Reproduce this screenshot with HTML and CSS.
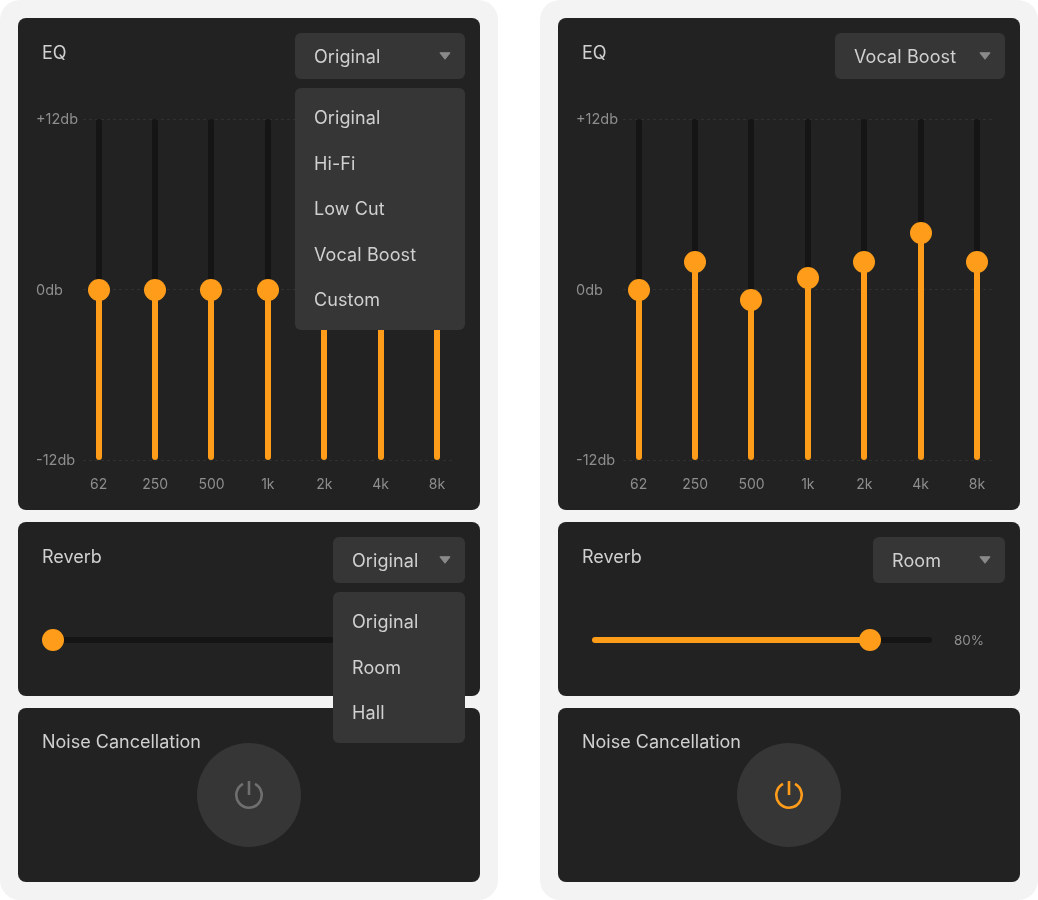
FILE: index.html
```html
<!DOCTYPE html>
<html lang="en">
<head>
<meta charset="utf-8">
<title>Audio settings</title>
<link rel="stylesheet" href="styles.css">
</head>
<body>
<main class="app">
  <section class="panel">
    <div class="card">
      <div class="head">
        <h2 class="title">EQ</h2>
        <div class="select select-wide">
          <div class="select-box"><span>Original</span><svg class="caret" viewBox="0 0 12 8"><path d="M1.2 .8h9.6L6 7z" fill="#8a8a8a" stroke="#8a8a8a" stroke-width="1.2" stroke-linejoin="round"/></svg></div>
          <ul class="menu">
            <li>Original</li><li>Hi-Fi</li><li>Low Cut</li><li>Vocal Boost</li><li>Custom</li>
          </ul>
        </div>
      </div>
      <div class="chart">
        <div class="axis">
          <div class="tick"><span class="tick-label">+12db</span><i class="tick-line"></i></div>
          <div class="tick"><span class="tick-label">0db</span><i class="tick-line"></i></div>
          <div class="tick"><span class="tick-label">-12db</span><i class="tick-line"></i></div>
        </div>
        <div class="bands">
          <div class="band"><div class="track"><div class="fill" style="height:50%"><b class="thumb"></b></div></div><span class="band-label">62</span></div>
          <div class="band"><div class="track"><div class="fill" style="height:50%"><b class="thumb"></b></div></div><span class="band-label">250</span></div>
          <div class="band"><div class="track"><div class="fill" style="height:50%"><b class="thumb"></b></div></div><span class="band-label">500</span></div>
          <div class="band"><div class="track"><div class="fill" style="height:50%"><b class="thumb"></b></div></div><span class="band-label">1k</span></div>
          <div class="band"><div class="track"><div class="fill" style="height:50%"><b class="thumb"></b></div></div><span class="band-label">2k</span></div>
          <div class="band"><div class="track"><div class="fill" style="height:50%"><b class="thumb"></b></div></div><span class="band-label">4k</span></div>
          <div class="band"><div class="track"><div class="fill" style="height:50%"><b class="thumb"></b></div></div><span class="band-label">8k</span></div>
        </div>
      </div>
    </div>
    <div class="card">
      <div class="head">
        <h2 class="title">Reverb</h2>
        <div class="select select-narrow">
          <div class="select-box"><span>Original</span><svg class="caret" viewBox="0 0 12 8"><path d="M1.2 .8h9.6L6 7z" fill="#8a8a8a" stroke="#8a8a8a" stroke-width="1.2" stroke-linejoin="round"/></svg></div>
          <ul class="menu">
            <li>Original</li><li>Room</li><li>Hall</li>
          </ul>
        </div>
      </div>
      <div class="level">
        <div class="level-track"><div class="level-fill" style="width:0.3%"><b class="thumb thumb-h"></b></div></div>
        <span class="level-value">0%</span>
      </div>
    </div>
    <div class="card card-noise">
      <h2 class="title">Noise Cancellation</h2>
      <button class="power" type="button"><svg viewBox="0 0 28 28" class="power-icon"><path d="M8 2.81a12.7 12.7 0 1 0 12 0" fill="none" stroke="#6f6f6f" stroke-width="2.6"/><path d="M14 0v14" stroke="#6f6f6f" stroke-width="2.6" fill="none"/></svg></button>
    </div>
  </section>

  <section class="panel">
    <div class="card">
      <div class="head">
        <h2 class="title">EQ</h2>
        <div class="select select-wide">
          <div class="select-box"><span>Vocal Boost</span><svg class="caret" viewBox="0 0 12 8"><path d="M1.2 .8h9.6L6 7z" fill="#8a8a8a" stroke="#8a8a8a" stroke-width="1.2" stroke-linejoin="round"/></svg></div>
        </div>
      </div>
      <div class="chart">
        <div class="axis">
          <div class="tick"><span class="tick-label">+12db</span><i class="tick-line"></i></div>
          <div class="tick"><span class="tick-label">0db</span><i class="tick-line"></i></div>
          <div class="tick"><span class="tick-label">-12db</span><i class="tick-line"></i></div>
        </div>
        <div class="bands">
          <div class="band"><div class="track"><div class="fill" style="height:50%"><b class="thumb"></b></div></div><span class="band-label">62</span></div>
          <div class="band"><div class="track"><div class="fill" style="height:58%"><b class="thumb"></b></div></div><span class="band-label">250</span></div>
          <div class="band"><div class="track"><div class="fill" style="height:46.9%"><b class="thumb"></b></div></div><span class="band-label">500</span></div>
          <div class="band"><div class="track"><div class="fill" style="height:53.4%"><b class="thumb"></b></div></div><span class="band-label">1k</span></div>
          <div class="band"><div class="track"><div class="fill" style="height:58%"><b class="thumb"></b></div></div><span class="band-label">2k</span></div>
          <div class="band"><div class="track"><div class="fill" style="height:66.6%"><b class="thumb"></b></div></div><span class="band-label">4k</span></div>
          <div class="band"><div class="track"><div class="fill" style="height:58%"><b class="thumb"></b></div></div><span class="band-label">8k</span></div>
        </div>
      </div>
    </div>
    <div class="card">
      <div class="head">
        <h2 class="title">Reverb</h2>
        <div class="select select-narrow">
          <div class="select-box"><span>Room</span><svg class="caret" viewBox="0 0 12 8"><path d="M1.2 .8h9.6L6 7z" fill="#8a8a8a" stroke="#8a8a8a" stroke-width="1.2" stroke-linejoin="round"/></svg></div>
        </div>
      </div>
      <div class="level">
        <div class="level-track"><div class="level-fill" style="width:81.76%"><b class="thumb thumb-h"></b></div></div>
        <span class="level-value">80%</span>
      </div>
    </div>
    <div class="card card-noise">
      <h2 class="title">Noise Cancellation</h2>
      <button class="power" type="button"><svg viewBox="0 0 28 28" class="power-icon"><path d="M8 2.81a12.7 12.7 0 1 0 12 0" fill="none" stroke="#ff9d1a" stroke-width="2.6"/><path d="M14 0v14" stroke="#ff9d1a" stroke-width="2.6" fill="none"/></svg></button>
    </div>
  </section>
</main>
</body>
</html>
```
FILE: styles.css
```css
* { box-sizing: border-box; }
html, body { margin: 0; padding: 0; background: #fff; }
body { font-family: "Inter", "Liberation Sans", sans-serif; color: #d0d0d0; }

.app { display: flex; justify-content: space-between; width: 1038px; height: 900px; overflow: hidden; }
.panel { width: 498px; height: 900px; padding: 18px; background: #f3f3f3; border-radius: 20px; display: flex; flex-direction: column; gap: 12px; will-change: transform; }
.card { position: relative; background: #222222; border-radius: 8px; padding: 15px 15px 15px 24px; }

.head { display: flex; justify-content: space-between; align-items: flex-start; }
.title { margin: 8px 0 0; font-size: 18px; line-height: 24px; font-weight: 400; color: #d0d0d0; }

.select { position: relative; z-index: 2; }
.select-wide { width: 170px; }
.select-narrow { width: 132px; }
.select-box { height: 46px; padding: 0 14px 0 19px; display: flex; align-items: center; justify-content: space-between; background: #363636; border-radius: 6px; font-size: 18px; letter-spacing: .1px; }
.caret { width: 12px; height: 8px; display: block; }
.menu { position: absolute; top: 55px; left: 0; right: 0; margin: 0; padding: 7px 19px; list-style: none; background: #363636; border-radius: 6px; font-size: 18px; letter-spacing: .1px; }
.menu li { height: 45.6px; line-height: 45.6px; }

.chart { display: grid; margin: 40px 0 0 -5px; }
.axis, .bands { grid-area: 1 / 1; }
.axis { height: 341px; display: flex; flex-direction: column; justify-content: space-between; margin-right: 12px; }
.tick { height: 0; display: flex; align-items: center; }
.tick-label { width: 47px; margin-left: -1px; font-size: 14.5px; line-height: 20px; color: #8e8e8e; flex: none; }
.tick-line { flex: 1; height: 1px; background: repeating-linear-gradient(90deg, #303030 0 3px, transparent 3px 6px); }
.bands { display: flex; margin-left: 33.5px; }
.band { width: 56.4px; display: flex; flex-direction: column; align-items: center; }
.band-label { margin-top: 14px; margin-bottom: 1px; font-size: 14px; line-height: 20px; color: #8e8e8e; }

.track { position: relative; width: 6px; height: 341px; border-radius: 3px; background: #151515; display: flex; align-items: flex-end; }
.fill { position: relative; width: 100%; border-radius: 3px; background: #ff9d1a; }
.thumb { position: absolute; left: 50%; top: 0; width: 22px; height: 22px; margin: -11px 0 0 -11px; border-radius: 50%; background: #ff9d1a; }
.thumb-h { left: 100%; top: 50%; }

.level { display: flex; align-items: center; gap: 22px; height: 22px; margin: 46px 0 30px 10px; }
.level-track { width: 340px; height: 6px; border-radius: 3px; background: #151515; flex: none; }
.level-fill { position: relative; height: 100%; border-radius: 3px; background: #ff9d1a; }
.level-value { font-size: 13.5px; color: #8e8e8e; }

.card-noise { display: grid; height: 174px; padding: 0; }
.card-noise .title { grid-area: 1 / 1; margin: 22px 0 0 24px; height: 24px; }
.power { grid-area: 1 / 1; place-self: center; width: 104px; height: 104px; padding: 0; border: 0; border-radius: 50%; background: #363636; display: flex; align-items: center; justify-content: center; }
.power-icon { width: 28px; height: 28px; display: block; overflow: visible; }
```
